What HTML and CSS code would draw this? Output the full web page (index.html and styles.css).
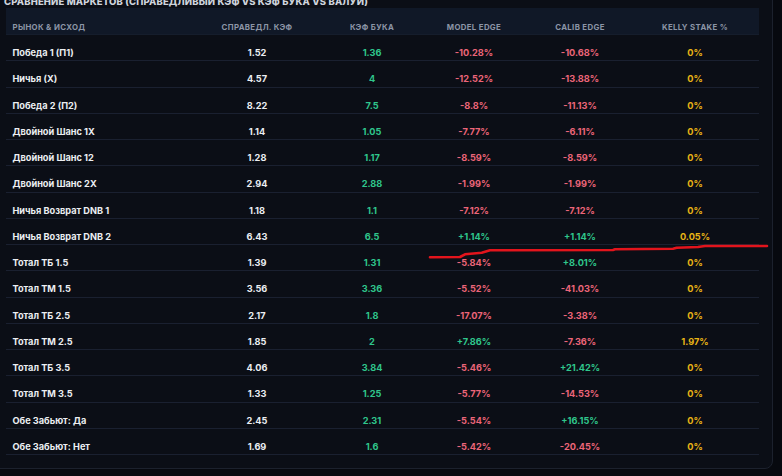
FILE: index.html
```html
<!DOCTYPE html>
<html lang="ru">
<head>
<meta charset="utf-8">
<title>Сравнение маркетов</title>
<link rel="stylesheet" href="styles.css">
</head>
<body>
<section class="card">
  <h2 class="title">Сравнение маркетов (справедливый кэф vs кэф бука vs валуй)</h2>
  <div class="table">
    <div class="row head">
      <div class="c name">Рынок &amp; исход</div>
      <div class="c">Справедл. кэф</div>
      <div class="c">Кэф бука</div>
      <div class="c">Model edge</div>
      <div class="c">Calib edge</div>
      <div class="c">Kelly stake %</div>
    </div>
    <div class="row"><div class="c name">Победа 1 (П1)</div><div class="c">1.52</div><div class="c g">1.36</div><div class="c r">-10.28%</div><div class="c r">-10.68%</div><div class="c y">0%</div></div>
    <div class="row"><div class="c name">Ничья (Х)</div><div class="c">4.57</div><div class="c g">4</div><div class="c r">-12.52%</div><div class="c r">-13.88%</div><div class="c y">0%</div></div>
    <div class="row"><div class="c name">Победа 2 (П2)</div><div class="c">8.22</div><div class="c g">7.5</div><div class="c r">-8.8%</div><div class="c r">-11.13%</div><div class="c y">0%</div></div>
    <div class="row"><div class="c name">Двойной Шанс 1X</div><div class="c">1.14</div><div class="c g">1.05</div><div class="c r">-7.77%</div><div class="c r">-6.11%</div><div class="c y">0%</div></div>
    <div class="row"><div class="c name">Двойной Шанс 12</div><div class="c">1.28</div><div class="c g">1.17</div><div class="c r">-8.59%</div><div class="c r">-8.59%</div><div class="c y">0%</div></div>
    <div class="row"><div class="c name">Двойной Шанс 2X</div><div class="c">2.94</div><div class="c g">2.88</div><div class="c r">-1.99%</div><div class="c r">-1.99%</div><div class="c y">0%</div></div>
    <div class="row"><div class="c name">Ничья Возврат DNB 1</div><div class="c">1.18</div><div class="c g">1.1</div><div class="c r">-7.12%</div><div class="c r">-7.12%</div><div class="c y">0%</div></div>
    <div class="row"><div class="c name">Ничья Возврат DNB 2</div><div class="c">6.43</div><div class="c g">6.5</div><div class="c g">+1.14%</div><div class="c g">+1.14%</div><div class="c y">0.05%</div></div>
    <div class="row"><div class="c name">Тотал ТБ 1.5</div><div class="c">1.39</div><div class="c g">1.31</div><div class="c r">-5.84%</div><div class="c g">+8.01%</div><div class="c y">0%</div></div>
    <div class="row"><div class="c name">Тотал ТМ 1.5</div><div class="c">3.56</div><div class="c g">3.36</div><div class="c r">-5.52%</div><div class="c r">-41.03%</div><div class="c y">0%</div></div>
    <div class="row"><div class="c name">Тотал ТБ 2.5</div><div class="c">2.17</div><div class="c g">1.8</div><div class="c r">-17.07%</div><div class="c r">-3.38%</div><div class="c y">0%</div></div>
    <div class="row"><div class="c name">Тотал ТМ 2.5</div><div class="c">1.85</div><div class="c g">2</div><div class="c g">+7.86%</div><div class="c r">-7.36%</div><div class="c y">1.97%</div></div>
    <div class="row"><div class="c name">Тотал ТБ 3.5</div><div class="c">4.06</div><div class="c g">3.84</div><div class="c r">-5.46%</div><div class="c g">+21.42%</div><div class="c y">0%</div></div>
    <div class="row"><div class="c name">Тотал ТМ 3.5</div><div class="c">1.33</div><div class="c g">1.25</div><div class="c r">-5.77%</div><div class="c r">-14.53%</div><div class="c y">0%</div></div>
    <div class="row"><div class="c name">Обе Забьют: Да</div><div class="c">2.45</div><div class="c g">2.31</div><div class="c r">-5.54%</div><div class="c g">+16.15%</div><div class="c y">0%</div></div>
    <div class="row"><div class="c name">Обе Забьют: Нет</div><div class="c">1.69</div><div class="c g">1.6</div><div class="c r">-5.42%</div><div class="c r">-20.45%</div><div class="c y">0%</div></div>
  </div>
</section>
<svg class="mark" viewBox="0 0 782 476" width="782" height="476" aria-hidden="true">
  <polyline points="430,257.3 460,257 465,254.3 481.7,252.7 490,250.3 613,250 615,249.3 673,248.7 676.7,247.7 698,247 705,246 767,246" fill="none" stroke="#e3141c" stroke-width="2.6" stroke-linejoin="round" stroke-linecap="round"/>
</svg>
</body>
</html>
```

FILE: styles.css
```css
html, body {
  margin: 0;
  padding: 0;
}
body {
  position: relative;
  width: 782px;
  height: 476px;
  overflow: hidden;
  background: #07090f;
  font-family: Inter, "Noto Sans", "DejaVu Sans", sans-serif;
}
.card {
  box-sizing: border-box;
  width: 784px;
  margin: -19px 0 0 -11px;
  padding: 14px 14px 13px 14px;
  background: #0b0e16;
  border: 1px solid #1c212d;
  border-radius: 8px;
}
.title {
  margin: 0;
  font-size: 9.5px;
  line-height: 12px;
  font-weight: 800;
  letter-spacing: 0.15px;
  text-transform: uppercase;
  color: #cfd4dd;
  white-space: nowrap;
}
.table {
  margin-left: 2px;
  width: 753px;
}
.row {
  display: grid;
  grid-template-columns: 193.5px 115px 115px 89px 123px 107px;
  padding-right: 10.5px;
  border-bottom: 1px solid #1a2030;
  font-size: 9.2px;
  line-height: 10px;
  font-weight: 700;
  color: #eceef2;
}
.row .c {
  padding: 13px 0 2.27px;
  text-align: center;
  white-space: nowrap;
}
.row.head {
  background: #101827;
  font-size: 7.8px;
  letter-spacing: 0.35px;
  text-transform: uppercase;
  color: #8c95a6;
  border-bottom-color: #151d2c;
}
.row.head .c {
  padding: 14px 0 2px;
}
.row .c.name {
  text-align: left;
  padding-left: 6.5px;
}
.g { color: #2fc68c; }
.r { color: #ec6579; }
.y { color: #e8b415; }
.mark {
  position: absolute;
  left: 0;
  top: 0;
  pointer-events: none;
}
```
